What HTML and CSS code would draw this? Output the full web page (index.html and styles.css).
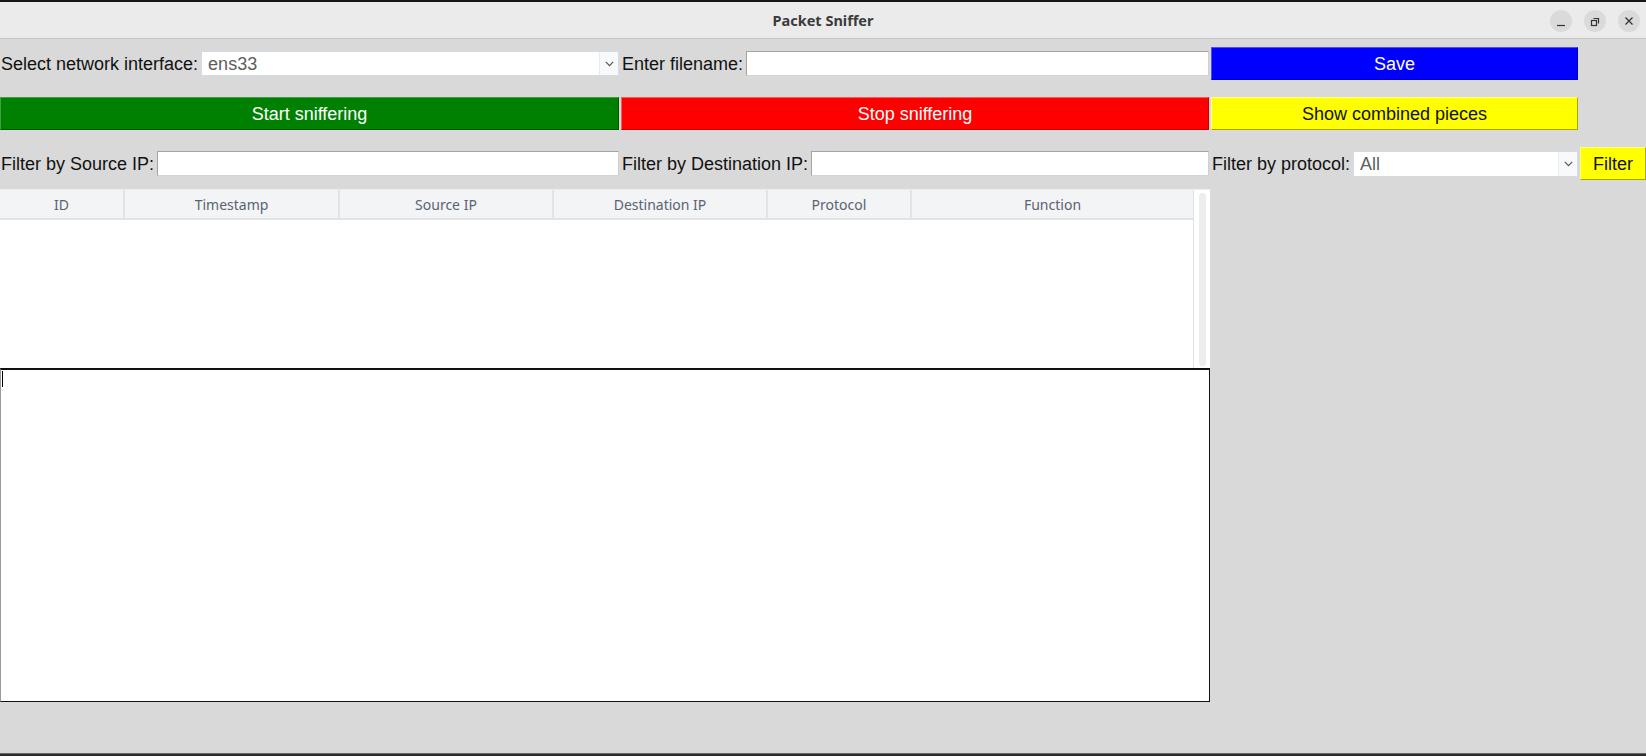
FILE: index.html
```html
<!DOCTYPE html>
<html lang="en">
<head>
<meta charset="utf-8">
<title>Packet Sniffer</title>
<link rel="stylesheet" href="styles.css">
</head>
<body>
<div class="window">
  <header class="titlebar">
    <div class="tb-side"></div>
    <div class="tb-title">Packet Sniffer</div>
    <div class="tb-side tb-buttons">
      <span class="wbtn"><svg width="22" height="22" viewBox="0 0 22 22"><path d="M7 15.5h8" stroke="#333" stroke-width="1.2" fill="none"/></svg></span>
      <span class="wbtn"><svg width="22" height="22" viewBox="0 0 22 22"><rect x="7.5" y="10.5" width="5" height="5" stroke="#333" stroke-width="1.2" fill="none"/><path d="M9.5 8.5h5v5" stroke="#333" stroke-width="1.2" fill="none"/></svg></span>
      <span class="wbtn"><svg width="22" height="22" viewBox="0 0 22 22"><path d="M7.5 7.5l7 7M14.5 7.5l-7 7" stroke="#333" stroke-width="1.3" fill="none"/></svg></span>
    </div>
  </header>

  <main class="app">
    <div class="controls">
      <div class="field">
        <span class="label">Select network interface:</span>
        <div class="combo"><span class="combo-value">ens33</span><span class="combo-arrow"><svg width="9" height="6" viewBox="0 0 9 6"><path d="M0.8 0.8L4.5 4.6L8.2 0.8" stroke="#555" stroke-width="1.2" fill="none"/></svg></span></div>
      </div>
      <div class="field">
        <span class="label">Enter filename:</span>
        <div class="entry"></div>
      </div>
      <div class="btn btn-blue">Save</div>
      <div></div>

      <div class="btn btn-green">Start sniffering</div>
      <div class="btn btn-red">Stop sniffering</div>
      <div class="btn btn-yellow">Show combined pieces</div>
      <div></div>

      <div class="field">
        <span class="label">Filter by Source IP:</span>
        <div class="entry"></div>
      </div>
      <div class="field">
        <span class="label">Filter by Destination IP:</span>
        <div class="entry"></div>
      </div>
      <div class="field">
        <span class="label">Filter by protocol:</span>
        <div class="combo combo-tall"><span class="combo-value">All</span><span class="combo-arrow"><svg width="9" height="6" viewBox="0 0 9 6"><path d="M0.8 0.8L4.5 4.6L8.2 0.8" stroke="#555" stroke-width="1.2" fill="none"/></svg></span></div>
      </div>
      <div class="btn btn-yellow btn-filter">Filter</div>
    </div>

    <div class="table">
      <div class="table-main">
        <div class="thead">
          <div class="th col-id">ID</div>
          <div class="th col-ts">Timestamp</div>
          <div class="th col-src">Source IP</div>
          <div class="th col-dst">Destination IP</div>
          <div class="th col-proto">Protocol</div>
          <div class="th col-fn">Function</div>
        </div>
        <div class="tbody"></div>
      </div>
      <div class="scrollbar"><div class="trough"></div></div>
    </div>

    <div class="textbox"><span class="caret"></span></div>
  </main>

  <footer class="bottombar"></footer>
</div>
</body>
</html>
```

FILE: styles.css
```css
* { box-sizing: border-box; }

html, body {
  margin: 0;
  padding: 0;
}

body {
  width: 1646px;
  height: 756px;
  overflow: hidden;
  background: #d9d9d9;
  font-family: "Liberation Sans", Arial, sans-serif;
}

.window {
  display: flex;
  flex-direction: column;
  height: 756px;
}

/* ---------- title bar ---------- */
.titlebar {
  height: 39px;
  flex: 0 0 39px;
  background: #ebebeb;
  border-top: 2px solid #161616;
  border-bottom: 1px solid #c3c3c3;
  display: grid;
  grid-template-columns: 1fr auto 1fr;
  align-items: center;
}

.tb-title {
  font-family: "Noto Sans", "DejaVu Sans", sans-serif;
  font-weight: 700;
  font-size: 14.5px;
  color: #3b3b3b;
  padding-bottom: 1px;
}

.tb-buttons {
  display: flex;
  justify-content: flex-end;
  gap: 12px;
  padding-right: 6px;
  padding-top: 1px;
}

.wbtn {
  width: 22px;
  height: 22px;
  border-radius: 50%;
  background: #dadada;
  display: flex;
}

/* ---------- main ---------- */
.app {
  flex: 1;
  padding-top: 8px;
  display: flex;
  flex-direction: column;
}

.controls {
  display: grid;
  grid-template-columns: 619px 588px 367px 66px;
  grid-template-rows: 33px 33px 33px;
  column-gap: 2px;
  row-gap: 17px;
}

.field {
  display: flex;
  align-items: center;
  min-width: 0;
}

.label {
  font-size: 18px;
  color: #111;
  padding: 1px 1px 0 1px;
  white-space: nowrap;
  flex: 0 0 auto;
}

.entry {
  flex: 1;
  height: 25px;
  margin-left: 2px;
  background: #fff;
  border: 1px solid #a4a4a4;
  border-right-color: #cfcfcf;
  border-bottom-color: #d4d4d4;
}

.combo {
  flex: 1;
  height: 25px;
  margin-left: 2px;
  background: #fff;
  border: 1px solid #d4dbe4;
  display: flex;
  align-items: stretch;
}

.combo-tall { height: 26px; }

.combo-value {
  flex: 1;
  font-size: 18px;
  color: #5d5d5d;
  padding-left: 6px;
  padding-top: 1px;
  line-height: 23px;
}

.combo-arrow {
  width: 19px;
  background: #f8f9fa;
  border-left: 1px solid #e8ebef;
  display: flex;
  align-items: center;
  justify-content: center;
}

/* ---------- buttons ---------- */
.btn {
  display: flex;
  align-items: center;
  justify-content: center;
  font-size: 18px;
  border: 1px solid;
  padding-top: 1px;
}

.btn-blue {
  background: #0000ff;
  color: #fff;
  border-color: #4d4dff #0000c8 #0000c8 #4d4dff;
}

.btn-green {
  background: #008000;
  color: #fff;
  border-color: #40a040 #005800 #005800 #40a040;
}

.btn-red {
  background: #ff0000;
  color: #fff;
  border-color: #ff5a5a #c80000 #c80000 #ff5a5a;
}

.btn-yellow {
  background: #ffff00;
  color: #111;
  border-color: #ffff80 #a8a800 #a8a800 #ffff80;
}

.btn-filter {
  font-size: 18px;
}

/* ---------- table ---------- */
.table {
  margin-top: 9px;
  width: 1210px;
  height: 179px;
  background: #fff;
  display: flex;
  border-top: 1px solid #eceff2;
}

.table-main {
  width: 1194px;
  border-right: 1px solid #dde3ea;
  display: flex;
  flex-direction: column;
}

.thead {
  display: flex;
  height: 30px;
  background: #f3f4f6;
  border-bottom: 2px solid #dfe4ea;
}

.th {
  font-family: "Noto Sans", "DejaVu Sans", sans-serif;
  font-size: 14px;
  color: #5a6371;
  display: flex;
  align-items: center;
  justify-content: center;
  border-left: 2px solid #dfe4ea;
}

.col-id { width: 123px; border-left: none; }
.col-ts { width: 215px; }
.col-src { width: 214px; }
.col-dst { width: 214px; }
.col-proto { width: 144px; }
.col-fn { flex: 1; }

.tbody { flex: 1; }

.scrollbar {
  flex: 1;
  padding: 3px 4px 2px 5px;
}

.trough {
  width: 7px;
  height: 100%;
  background: #ebedef;
  border-radius: 4px;
}

/* ---------- text area ---------- */
.textbox {
  width: 1210px;
  height: 334px;
  background: #fff;
  border: 1px solid #111;
  border-top-width: 2px;
  border-left-color: #9a9a9a;
}

.caret {
  display: block;
  width: 1px;
  height: 16px;
  margin: 1px 0 0 1px;
  background: #000;
}

/* ---------- bottom ---------- */
.bottombar {
  flex: 0 0 3px;
  height: 3px;
  background: #2c2c2c;
  border-top: 1px solid #6a6a6a;
}
```
